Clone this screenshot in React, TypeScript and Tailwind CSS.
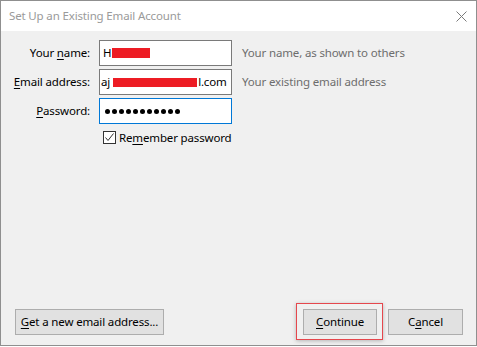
import React from "react";

const font = { fontFamily: '"Noto Sans", "Open Sans", sans-serif' };

function U({ children }: { children: React.ReactNode }) {
  return <span className="underline underline-offset-[2px]">{children}</span>;
}

export default function App() {
  return (
    <div
      className="w-[477px] h-[346px] border border-[#8f8f8f] flex flex-col bg-[#f0f0f0] text-[11.5px] tracking-[-0.15px] text-black leading-none whitespace-nowrap"
      style={font}
    >
      <div className="h-[30px] bg-white flex items-center justify-between pl-[8px] pr-[9px]">
        <span className="text-[#9a9a9a]">Set Up an Existing Email Account</span>
        <svg width="11" height="11" viewBox="0 0 11 11">
          <path d="M0.5 0.5 L10.5 10.5 M10.5 0.5 L0.5 10.5" stroke="#7a7a7a" strokeWidth="1" />
        </svg>
      </div>
      <div className="flex-1 flex flex-col pt-[9px]">
        <div className="flex flex-col gap-[3px]">
          <div className="flex items-center h-[26px]">
            <div className="w-[89px] text-right">
              Your <U>n</U>ame:
            </div>
            <div className="ml-[9px] w-[133px] h-[26px] bg-white border border-[#7a7a7a] flex items-center pl-[3px]">
              <span>H</span>
              <span className="ml-[1px] w-[38px] h-[10px] bg-[#ed1c24]" />
            </div>
            <div className="ml-[10px] text-[#6d6d6d]">Your name, as shown to others</div>
          </div>
          <div className="flex items-center h-[26px]">
            <div className="w-[89px] text-right">
              <U>E</U>mail address:
            </div>
            <div className="ml-[9px] w-[133px] h-[26px] bg-white border border-[#7a7a7a] flex items-center pl-[1px] overflow-hidden">
              <span>aj</span>
              <span className="ml-[3px] w-[84px] h-[9px] bg-[#ed1c24]" />
              <span className="ml-[1px]">l.com</span>
            </div>
            <div className="ml-[10px] text-[#6d6d6d]">Your existing email address</div>
          </div>
          <div className="flex items-center h-[26px]">
            <div className="w-[89px] text-right">
              <U>P</U>assword:
            </div>
            <div className="ml-[9px] w-[133px] h-[26px] bg-white border border-[#0078d7] flex items-center pl-[5px] gap-[2px]">
              {Array.from({ length: 11 }).map((_, i) => (
                <span key={i} className="w-[5px] h-[5px] rounded-full bg-black" />
              ))}
            </div>
          </div>
        </div>
        <div className="flex items-center mt-[7px] ml-[102px]">
          <div className="w-[13px] h-[13px] border border-[#333333] bg-white flex items-center justify-center">
            <svg width="11" height="11" viewBox="0 0 11 11">
              <path d="M1.5 5.5 L4 8.5 L9.5 1.5" stroke="#333333" strokeWidth="1" fill="none" />
            </svg>
          </div>
          <span className="ml-[3px]">
            Re<U>m</U>ember password
          </span>
        </div>
        <div className="mt-auto flex items-center pb-[10px] pl-[14px] pr-[13px]">
          <button className="w-[149px] h-[26px] bg-[#e1e1e1] border border-[#adadad] flex items-center justify-center">
            <span>
              <U>G</U>et a new email address...
            </span>
          </button>
          <div className="ml-auto relative">
            <div className="absolute -left-[7px] -right-[6px] -top-[6px] -bottom-[5px] border border-[#e5474d] shadow-[0_1px_4px_rgba(0,0,0,0.25)]" />
            <button className="relative w-[74px] h-[26px] bg-[#e1e1e1] border border-[#adadad] flex items-center justify-center">
              <span>
                <U>C</U>ontinue
              </span>
            </button>
          </div>
          <button className="ml-[11px] w-[75px] h-[26px] bg-[#e1e1e1] border border-[#adadad] flex items-center justify-center">
            <span>
              C<U>a</U>ncel
            </span>
          </button>
        </div>
      </div>
    </div>
  );
}
